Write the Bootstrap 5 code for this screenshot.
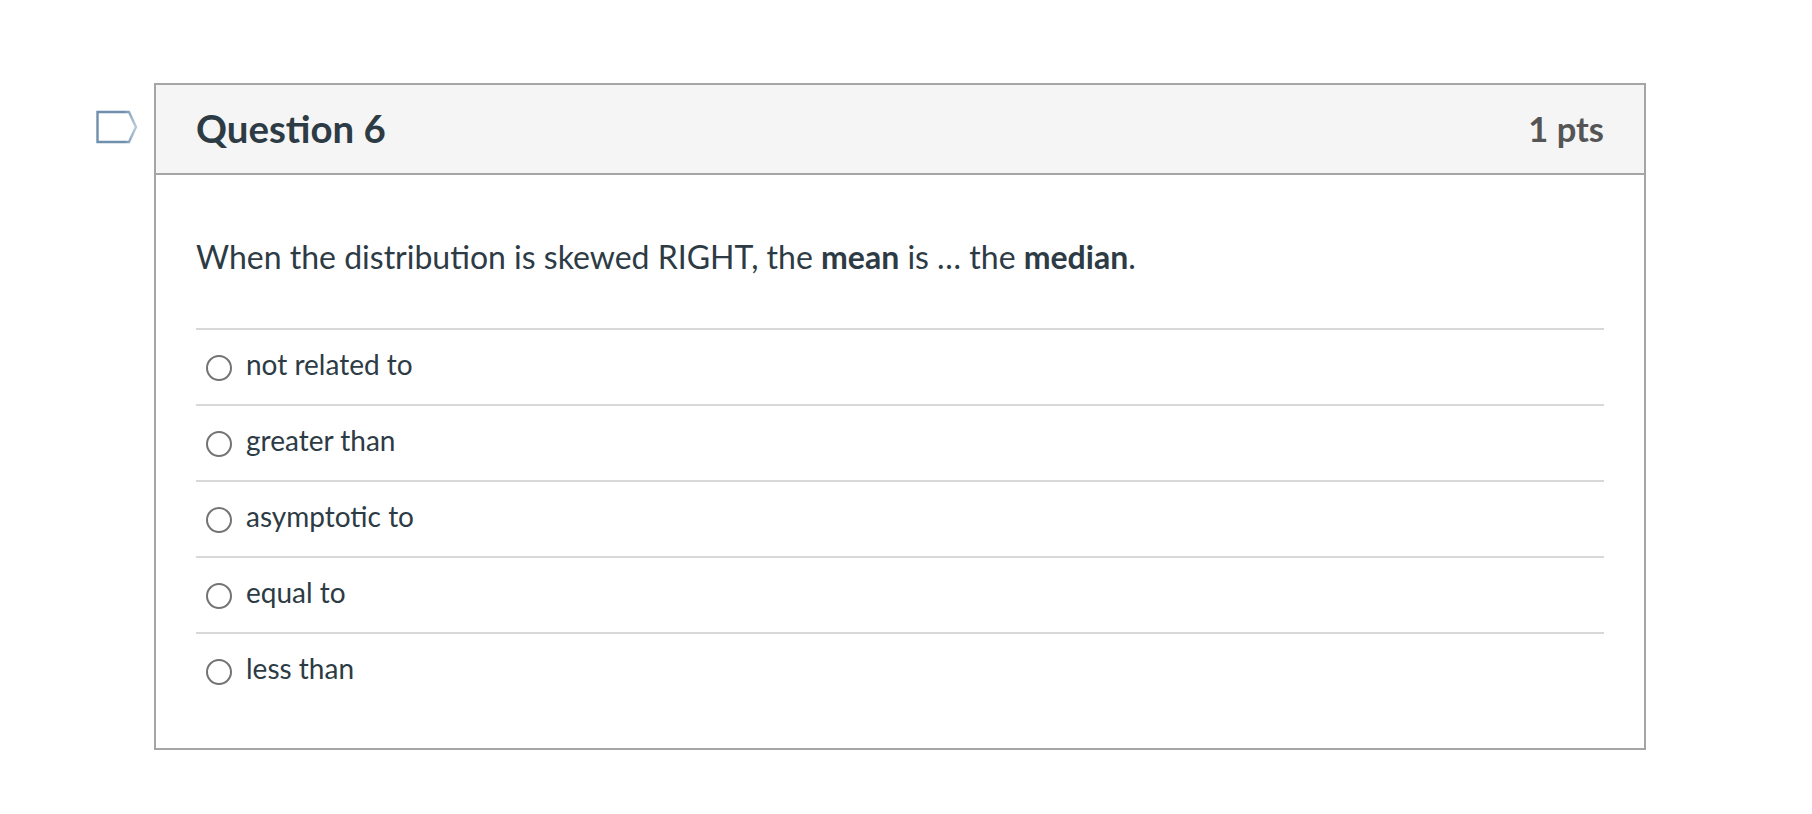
<!DOCTYPE html>
<html lang="en">
<head>
    <meta charset="UTF-8">
    <meta name="viewport" content="width=device-width, initial-scale=1.0">
    <title>Question 6</title>
    <link rel="stylesheet" href="https://cdn.jsdelivr.net/npm/bootstrap@5.3.0/dist/css/bootstrap.min.css">
    <style>
        body {
            background-color: #fff;
            color: #2d3b45;
            font-family: Lato, "Liberation Sans", sans-serif;
        }
        .quiz-page {
            padding: 83px 0 0 96px;
            width: 1646px;
        }
        .flag-col {
            width: 58px;
            padding-top: 27px;
        }
        .quiz-card {
            border: 2px solid #a5a5a5;
            border-radius: 0;
            height: 667px;
        }
        .quiz-card .quiz-head {
            background-color: #f5f5f5;
            border-bottom: 2px solid #a5a5a5;
            border-radius: 0;
            height: 90px;
            padding: 0 40px;
        }
        .quiz-title {
            font-size: 38.4px;
            font-weight: 700;
            margin: 0 0 2px;
            color: #2d3b45;
        }
        .quiz-pts {
            font-size: 34.5px;
            font-weight: 700;
            color: #555;
        }
        .quiz-body {
            padding: 0 40px;
        }
        .quiz-text {
            font-size: 32px;
            line-height: 48px;
            margin: 58px 0 47px;
        }
        .quiz-answers {
            border-radius: 0;
        }
        .quiz-answers .quiz-answer {
            border-color: #d8d8d8;
            border-style: solid;
            border-width: 2px 0 0;
            height: 76px;
            padding: 0 0 6px 10px;
            color: #2d3b45;
            font-size: 28px;
            background: transparent;
        }
        .quiz-radio {
            width: 26px;
            height: 26px;
            margin-top: 8px;
            border: 2px solid #737373;
            border-radius: 50%;
            flex-shrink: 0;
        }
        .quiz-gap {
            gap: 14px;
        }
    </style>
</head>
<body>
    <div class="quiz-page d-flex">
        <div class="flag-col flex-shrink-0">
            <svg width="42" height="34" viewBox="0 0 42 34">
                <defs>
                    <linearGradient id="flagStroke" x1="0" y1="0" x2="1" y2="0">
                        <stop offset="0.7" stop-color="#6f8fad"/>
                        <stop offset="1" stop-color="#b9cad9"/>
                    </linearGradient>
                </defs>
                <path d="M1.5 2H33L40 17L33 32H1.5Z" fill="#fff" stroke="url(#flagStroke)" stroke-width="2.4"/>
            </svg>
        </div>
        <div class="card quiz-card flex-grow-1">
            <div class="card-header quiz-head d-flex justify-content-between align-items-center">
                <h2 class="quiz-title">Question 6</h2>
                <span class="quiz-pts">1 pts</span>
            </div>
            <div class="card-body quiz-body">
                <p class="quiz-text">When the distribution is skewed RIGHT, the <strong>mean</strong> is … the <strong>median</strong>.</p>
                <ul class="list-group quiz-answers">
                    <li class="list-group-item quiz-answer d-flex align-items-center quiz-gap"><span class="quiz-radio"></span>not related to</li>
                    <li class="list-group-item quiz-answer d-flex align-items-center quiz-gap"><span class="quiz-radio"></span>greater than</li>
                    <li class="list-group-item quiz-answer d-flex align-items-center quiz-gap"><span class="quiz-radio"></span>asymptotic to</li>
                    <li class="list-group-item quiz-answer d-flex align-items-center quiz-gap"><span class="quiz-radio"></span>equal to</li>
                    <li class="list-group-item quiz-answer d-flex align-items-center quiz-gap"><span class="quiz-radio"></span>less than</li>
                </ul>
            </div>
        </div>
    </div>
    <script src="https://cdn.jsdelivr.net/npm/bootstrap@5.3.0/dist/js/bootstrap.bundle.min.js"></script>
</body>
</html>
